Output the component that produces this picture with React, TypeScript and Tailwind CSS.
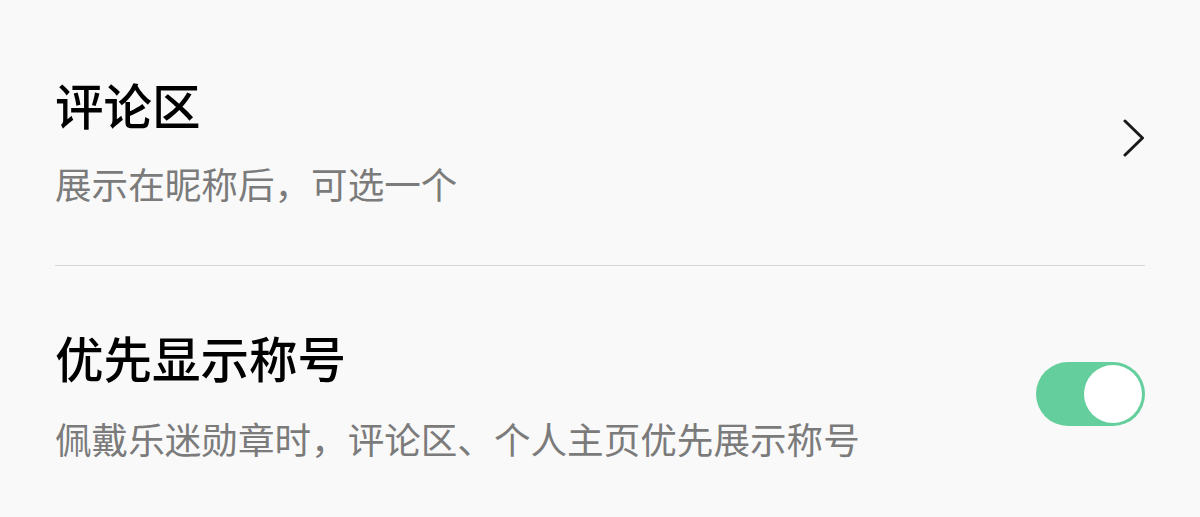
import { useState } from 'react';

const FONT = "font-['Noto_Sans_CJK_SC','Noto_Sans',sans-serif]";

// 设置页里的两行：评论区入口 + 优先显示称号开关
export default function App() {
  const [on, setOn] = useState(true);

  return (
    <div className={`min-h-[517px] w-full bg-[#f9f9f9] px-[55px] ${FONT}`}>
      {/* 评论区 */}
      <div className="flex items-start justify-between pt-[76px] pb-[59px]">
        <div className="flex flex-col">
          <span className="text-[48.5px] leading-[56px] font-medium text-black">评论区</span>
          <span className="mt-[30px] text-[36.6px] leading-[44px] text-[#7b7b7b]">展示在昵称后，可选一个</span>
        </div>
        <svg className="mt-[43px] h-[38px] w-[22px]" viewBox="0 0 22 38" fill="none">
          <path d="M2 2 L19.5 19 L2 36" stroke="#1a1a1a" strokeWidth="3" strokeLinecap="round" strokeLinejoin="round" />
        </svg>
      </div>

      <div className="h-px bg-[#d6d6d6]" />

      {/* 优先显示称号 */}
      <div className="flex items-start justify-between pt-[63px]">
        <div className="flex flex-col">
          <span className="text-[48.5px] leading-[56px] font-medium text-black">优先显示称号</span>
          <span className="mt-[32px] text-[36.6px] leading-[44px] text-[#7b7b7b]">
            佩戴乐迷勋章时，评论区、个人主页优先展示称号
          </span>
        </div>
        <button
          type="button"
          onClick={() => setOn(!on)}
          className={`mt-[33px] flex h-[64px] w-[109px] items-center rounded-full p-[3px] ${
            on ? 'justify-end bg-[#64cf9c]' : 'justify-start bg-[#d9d9d9]'
          }`}
        >
          <span className="h-[58px] w-[58px] rounded-full bg-white" />
        </button>
      </div>
    </div>
  );
}
